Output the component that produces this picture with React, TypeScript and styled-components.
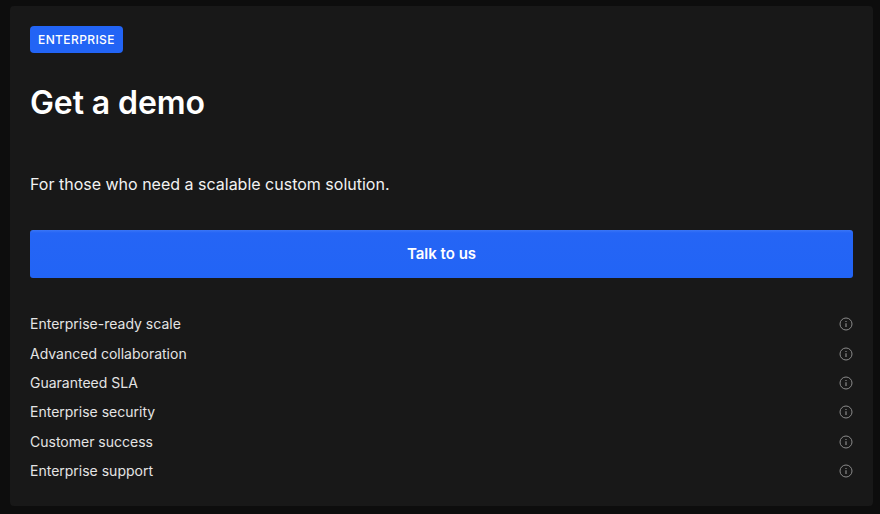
import React from "react"
import styled, { createGlobalStyle } from "styled-components"

const features = [
    'Enterprise-ready scale',
    'Advanced collaboration',
    'Guaranteed SLA',
    'Enterprise security',
    'Customer success',
    'Enterprise support',
]

const GlobalStyle = createGlobalStyle`
    html, body {
        margin: 0;
        padding: 0;
        background: #0d0d0d;
    }
    * {
        box-sizing: border-box;
    }
`

const Page = styled.div`
    width: 880px;
    height: 514px;
    padding: 6px 7px 8px 10px;
    font-family: "Inter", "Liberation Sans", sans-serif;
`

const Card = styled.section`
    height: 500px;
    background: #181818;
    border-radius: 4px;
    padding: 20px 20px 0;
    display: flex;
    flex-direction: column;
`

const Badge = styled.span`
    align-self: flex-start;
    height: 27px;
    padding: 0 8px;
    display: flex;
    align-items: center;
    background: #2264f5;
    border-radius: 4px;
    color: #fff;
    font-size: 12px;
    font-weight: 500;
    letter-spacing: 0.4px;
`

const Title = styled.h2`
    margin: 30px 0 0;
    height: 40px;
    line-height: 40px;
    color: #fff;
    font-size: 32px;
    font-weight: 600;
    letter-spacing: -0.1px;
`

const Lead = styled.p`
    margin: 49px 0 0;
    height: 24px;
    line-height: 24px;
    color: #f2f2f2;
    font-size: 16px;
`

const Cta = styled.button`
    margin-top: 34px;
    height: 48px;
    padding: 0 0 2px;
    border: 0;
    border-radius: 3px;
    background: linear-gradient(#3a75f6 0, #2565f5 3px, #2264f5 100%);
    color: #fff;
    font-family: inherit;
    font-size: 15px;
    font-weight: 600;
`

const List = styled.ul`
    list-style: none;
    margin: 31px 0 0;
    padding: 0;
`

const Row = styled.li`
    height: 29.4px;
    display: flex;
    align-items: center;
    justify-content: space-between;
    color: #e4e4e4;
    font-size: 14px;
`

const InfoGlyph = styled.svg`
    margin-top: 1px;
`

const InfoIcon = () => (
    <InfoGlyph width="14" height="14" viewBox="0 0 14 14" fill="none" stroke="#8a8a8a" strokeWidth="1">
        <circle cx="7" cy="7" r="6" />
        <path d="M7 6.3v3.6" strokeWidth="1.2" />
        <path d="M7 4v1" strokeWidth="1.2" />
    </InfoGlyph>
)

const App: React.FC = (): JSX.Element => {
    return (
        <Page>
            <GlobalStyle />
            <Card>
                <Badge>ENTERPRISE</Badge>
                <Title>Get a demo</Title>
                <Lead>For those who need a scalable custom solution.</Lead>
                <Cta>Talk to us</Cta>
                <List>
                    {features.map(name => (
                        <Row key={name}>
                            <span>{name}</span>
                            <InfoIcon />
                        </Row>
                    ))}
                </List>
            </Card>
        </Page>
    )
}

export default App
